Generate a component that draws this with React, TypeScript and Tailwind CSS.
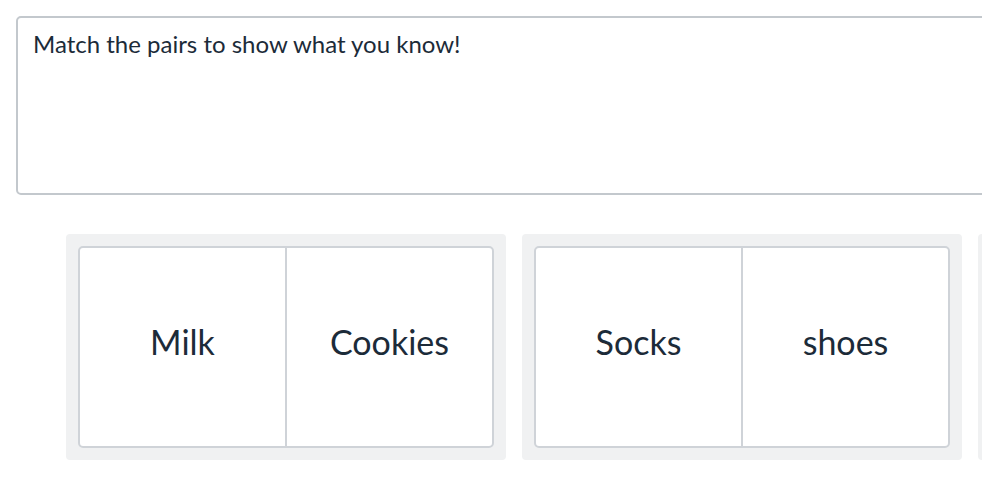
const pairs = [
  ["Milk", "Cookies"],
  ["Socks", "shoes"],
  ["", ""],
]

function PairCard({ left, right }: { left: string; right: string }) {
  return (
    <div className="w-[440px] shrink-0 rounded-[4px] bg-[#f0f1f2] p-3">
      <div className="flex h-[202px] rounded-[5px] border-2 border-[#cfd3d8] bg-white text-[34px] text-[#1c2b39]">
        <div className="flex flex-1 items-center justify-center border-r-2 border-[#cfd3d8] pb-3">{left}</div>
        <div className="flex flex-1 items-center justify-center pb-3">{right}</div>
      </div>
    </div>
  )
}

export default function App() {
  return (
    <div className="h-[488px] w-[982px] overflow-hidden bg-white font-['Lato','Noto_Sans',sans-serif]">
      <div className="pt-4 pl-4">
        <div className="h-[179px] w-[1000px] rounded-[5px] border-2 border-[#c3c8cd] px-[15px] pt-[11px] text-[24px] leading-[30px] text-[#1c2b39]">
          Match the pairs to show what you know!
        </div>
      </div>
      <div className="mt-[39px] flex gap-4 pl-[66px]">
        {pairs.map(([l, r], i) => (
          <PairCard key={i} left={l} right={r} />
        ))}
      </div>
    </div>
  )
}
